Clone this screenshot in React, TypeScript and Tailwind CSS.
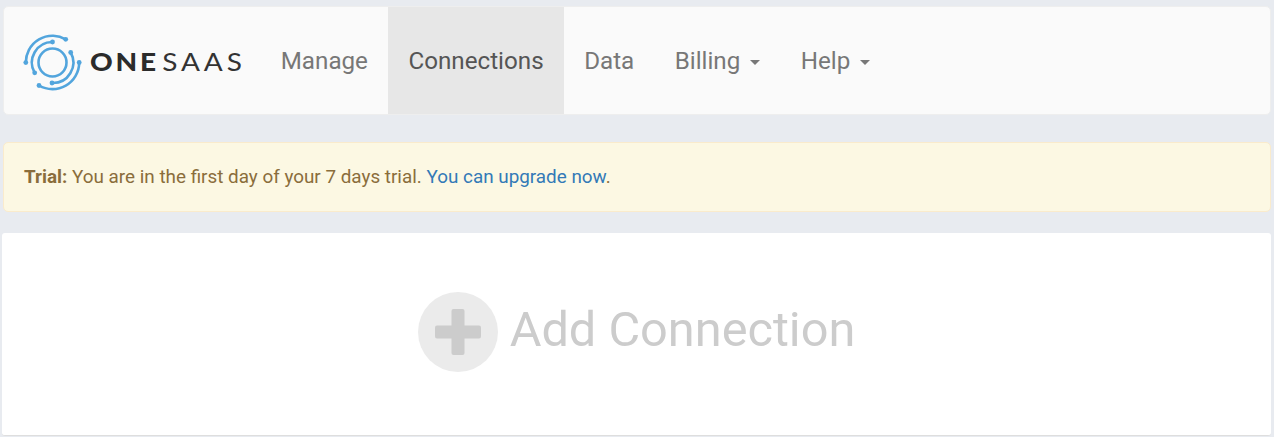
import React from "react";

function Logo() {
  return (
    <svg width="60" height="60" viewBox="24 33 60 60" fill="none" stroke="#52a5dd" strokeLinecap="round" strokeWidth="2.6" className="shrink-0 mt-[5px]">
      <circle cx="53.5" cy="62.5" r="14" />
      <path d="M66.7 39.3 A26.7 26.7 0 0 0 26.8 62.6" />
      <path d="M53.5 42 A20.5 20.5 0 0 0 35.7 72.8" />
      <path d="M80.2 62.5 A26.7 26.7 0 0 1 40 85.5" />
      <path d="M71.7 52.5 A20.5 20.5 0 0 1 53 83" />
      <g fill="#52a5dd" stroke="none">
        <circle cx="66.7" cy="39.3" r="2.4" />
        <circle cx="53.5" cy="42" r="2.4" />
        <circle cx="26.8" cy="62.6" r="2.4" />
        <circle cx="35.7" cy="72.8" r="2.4" />
        <circle cx="80.2" cy="62.5" r="2.4" />
        <circle cx="40" cy="85.5" r="2.4" />
        <circle cx="71.7" cy="52.5" r="2.4" />
        <circle cx="53" cy="83" r="2.4" />
      </g>
    </svg>
  );
}

function NavItem({ label, active, caret }: { label: string; active?: boolean; caret?: boolean }) {
  return (
    <a className={`flex items-center px-[20.25px] pt-[2px] text-[24.2px] ${active ? "bg-[#e7e7e7] text-[#555555]" : "text-[#777777]"}`}>
      {label}
      {caret && <span className="ml-[10px] mt-[2px] w-0 h-0 border-x-[5px] border-x-transparent border-t-[5px] border-t-[#777777]" />}
    </a>
  );
}

export default function App() {
  return (
    <div className="w-[1274px] h-[437px] overflow-hidden bg-[#e8ebf0] pl-[2px] pr-[3px] pt-[6px] font-['Roboto',sans-serif]">
      <nav className="ml-px h-[109px] flex bg-[#fafafa] rounded-[5px] border border-[#eeeeee] items-stretch">
        <div className="flex items-center pl-[19px] w-[256.5px] shrink-0">
          <Logo />
          <span className="ml-[7px] mt-[1px] text-[25px] leading-none text-[#2b2b2b] tracking-[0.1em] font-['Lato',sans-serif] whitespace-nowrap origin-left scale-x-[1.12]">
            <span className="font-black">ONE</span>
            <span className="ml-[3px] font-normal text-[#333333] tracking-[0.14em]">SAAS</span>
          </span>
        </div>
        <div className="flex items-stretch">
          <NavItem label="Manage" />
          <NavItem label="Connections" active />
          <NavItem label="Data" />
          <NavItem label="Billing" caret />
          <NavItem label="Help" caret />
        </div>
      </nav>
      <div className="ml-px mt-[27px] h-[70px] flex items-center bg-[#fcf8e3] border border-[#faebcc] rounded-[5px] pl-5 pt-px text-[18.86px] text-[#8a6d3b]">
        <p>
          <strong className="font-bold">Trial:</strong> You are in the first day of your 7 days trial.{" "}
          <a className="text-[#337ab7]">You can upgrade now</a>.
        </p>
      </div>
      <div className="mt-[21px] h-[203px] bg-white rounded-[3px] border-b border-[#dedede] flex justify-center pt-[59px]">
        <div className="flex items-center h-[80px] gap-[12px]">
          <div className="w-[80px] h-[80px] rounded-full bg-[#ebebeb] flex items-center justify-center">
            <svg width="46" height="46" viewBox="0 0 46 46" fill="#cccccc">
              <path d="M16.5 2 a2 2 0 0 1 2 -2 h9 a2 2 0 0 1 2 2 v14.5 h14.5 a2 2 0 0 1 2 2 v9 a2 2 0 0 1 -2 2 h-14.5 v14.5 a2 2 0 0 1 -2 2 h-9 a2 2 0 0 1 -2 -2 v-14.5 h-14.5 a2 2 0 0 1 -2 -2 v-9 a2 2 0 0 1 2 -2 h14.5 z" />
            </svg>
          </div>
          <span className="text-[48.7px] text-[#cccccc] leading-none -mt-[3px]">Add Connection</span>
        </div>
      </div>
    </div>
  );
}
